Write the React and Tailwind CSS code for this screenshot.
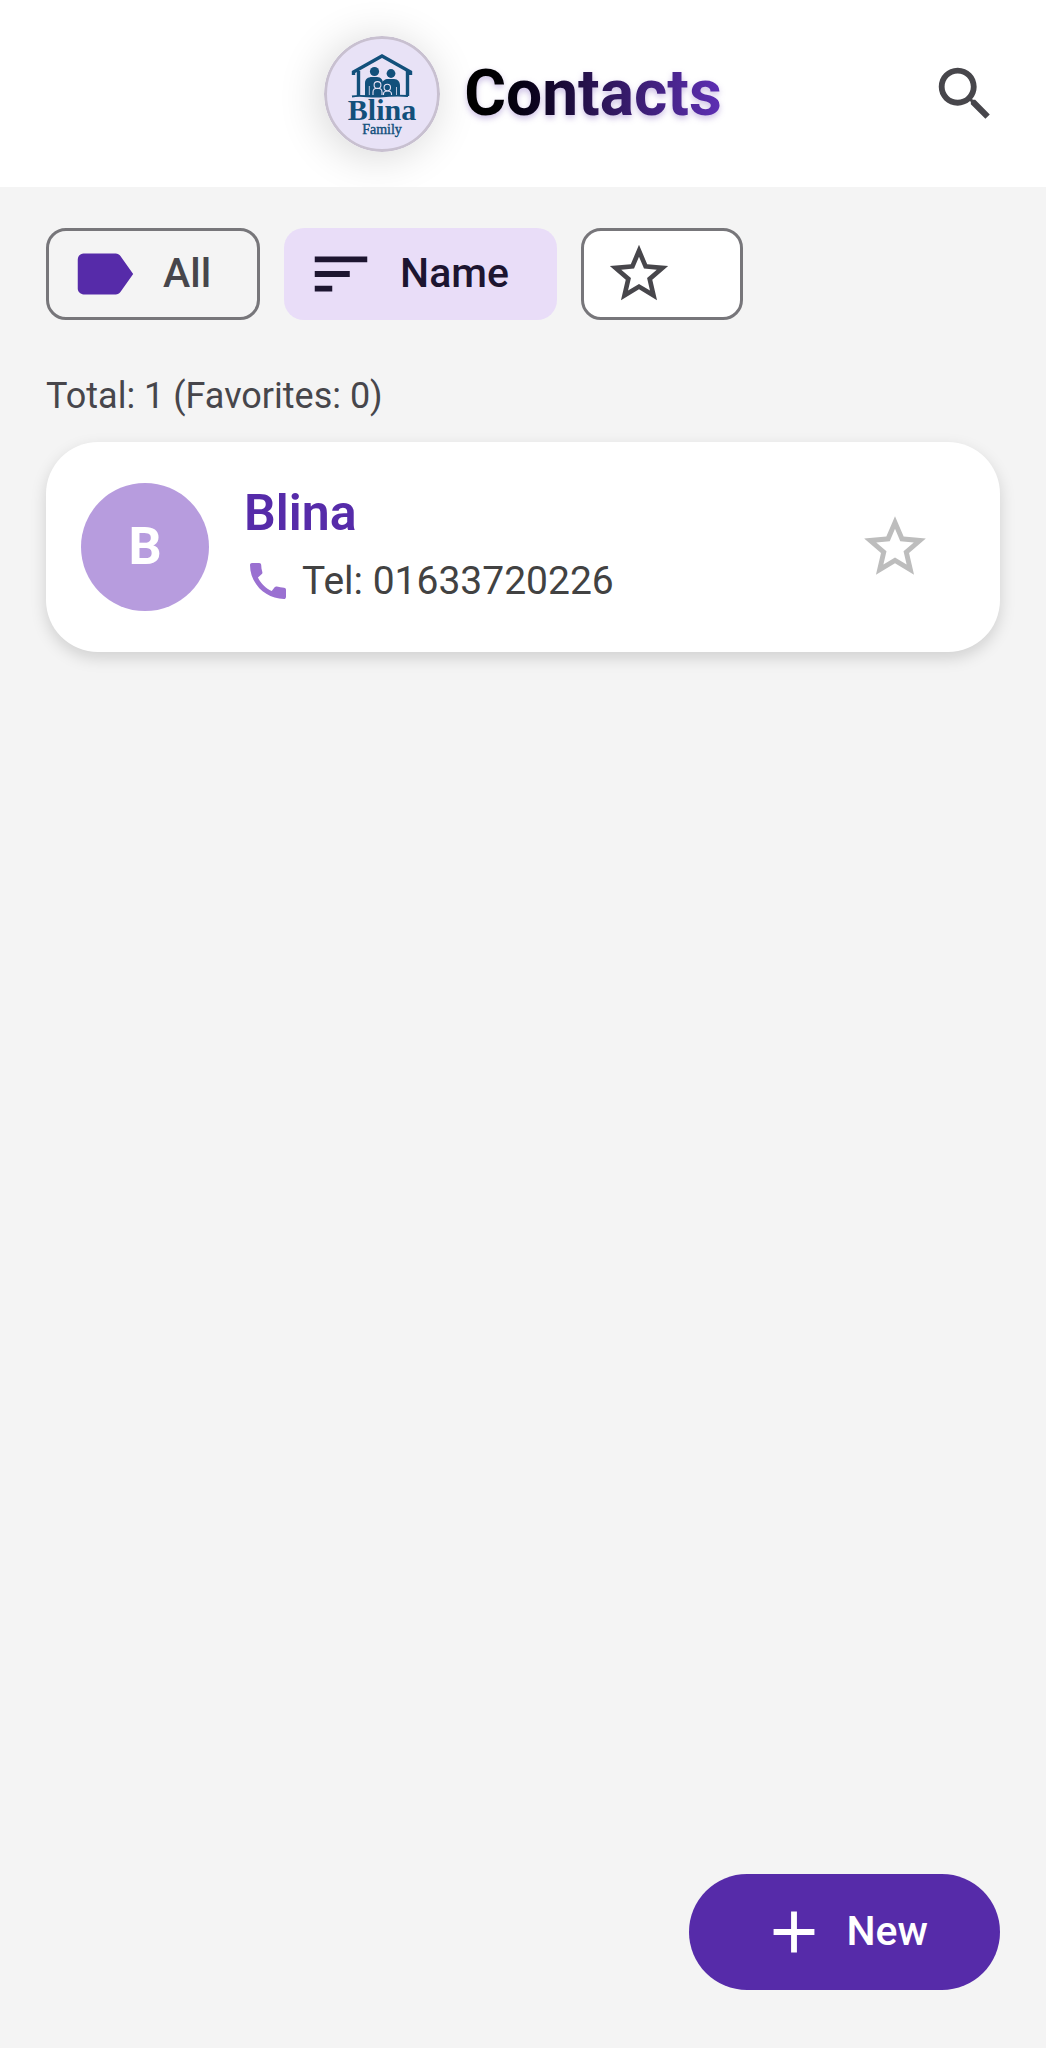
const LABEL = "M17.63 5.84C17.27 5.33 16.67 5 16 5L5 5.01C3.9 5.01 3 5.9 3 7v10c0 1.1.9 1.99 2 1.99L16 19c.67 0 1.27-.33 1.63-.84L22 12l-4.37-6.16z";
const SORT = "M3 18h6v-2H3v2zM3 6v2h18V6H3zm0 7h12v-2H3v2z";
const STAR = "M22 9.24l-7.19-.62L12 2 9.19 8.63 2 9.24l5.46 4.73L5.82 21 12 17.27 18.18 21l-1.63-7.03L22 9.24zM12 15.4l-3.76 2.27 1-4.28-3.32-2.88 4.38-.38L12 6.1l1.71 4.04 4.38.38-3.32 2.88 1 4.28L12 15.4z";
const SEARCH = "M15.5 14h-.79l-.28-.27C15.41 12.59 16 11.11 16 9.5 16 5.91 13.09 3 9.5 3S3 5.91 3 9.5 5.91 16 9.5 16c1.61 0 3.09-.59 4.23-1.57l.27.28v.79l5 4.99L20.49 19l-4.99-5zm-6 0C7.01 14 5 11.99 5 9.5S7.01 5 9.5 5 14 7.01 14 9.5 11.99 14 9.5 14z";
const PHONE = "M3.990 3C3.450 3 3 3.450 3 3.990 3 13.280 10.730 21 20.010 21c.71 0 .99-.63.99-1.180v-3.450c0-.54-.45-.99-.99-.99-1.240 0-2.450-.2-3.570-.57-.35-.12-.74-.03-1.010.24l-1.570 1.970c-2.830-1.350-5.480-3.900-6.890-6.830l1.950-1.660c.27-.28.35-.67.24-1.020-.37-1.110-.56-2.300-.56-3.530 0-.54-.45-.99-.99-.99H3.990z";
const PLUS = "M19 13h-6v6h-2v-6H5v-2h6V5h2v6h6v2z";

function Icon({ d, className }) {
  return (
    <svg viewBox="0 0 24 24" fill="currentColor" aria-hidden="true" className={`shrink-0 ${className}`}>
      <path d={d} />
    </svg>
  );
}

function Logo() {
  return (
    <svg viewBox="0 0 116 116" role="img" aria-label="Blina Family" className="size-29 rounded-full shadow-[-4px_4px_44px_rgba(0,0,0,0.16)]">
      <circle cx="58" cy="58" r="56.5" fill="#e8e2f6" stroke="#c8c0d0" strokeWidth="3" />
      <g fill="none" stroke="#12507b" strokeWidth="3.4">
        <path d="M29.500 39v-3L58 20 86.500 36v3" />
        <path d="M34.500 35v25M83.500 35v25" />
        <path d="M28 60.500c10-2 18 1 28 0s18-1.500 28-.5" strokeWidth="1.800" />
      </g>
      <g fill="#12507b">
        <circle cx="50.500" cy="35.500" r="4.600" />
        <circle cx="67" cy="37.500" r="4.400" />
        <path d="M41 60V47c0-4 3-6 7-6h5c4 0 6 3 6 7v12z" />
        <path d="M58 60V48c0-3 3-5 6-5h6c4 0 6 3 6 7v10z" />
      </g>
      <g fill="#12507b" stroke="#e8e2f6" strokeWidth="1.100">
        <path d="M49 59v-3c0-5 9-5 9 0v3M59.500 59v-1c0-4 8-4 8 0v1" />
        <circle cx="53.500" cy="49" r="3.400" />
        <circle cx="63.300" cy="51.500" r="3.200" />
      </g>
      <path d="M45.300 50v9M72.500 51v8" stroke="#e8e2f6" strokeWidth="0.800" />
      <text textAnchor="middle" fill="#12507b" stroke="#12507b" fontFamily="Liberation Serif, serif">
        <tspan x="58" y="84" fontSize="30" fontWeight="700" strokeWidth="0">Blina</tspan>
        <tspan x="58" y="98" fontSize="14" strokeWidth="0.400">Family</tspan>
      </text>
    </svg>
  );
}

export default function App() {
  return (
    <div className="flex min-h-screen flex-col bg-[#f4f4f4] font-['Roboto',sans-serif] text-[#47464b]">
      <header className="grid grid-cols-[1fr_auto_1fr] items-center overflow-hidden bg-white px-[46px] pt-9 pb-[35px]">
        <div className="col-start-2 flex items-center gap-6">
          <Logo />
          <h1 className="bg-linear-to-r from-black via-[#2a1452] to-[#5e2fb5] bg-clip-text text-[64px] leading-[80px] font-bold text-transparent drop-shadow-[0_3px_3px_rgba(86,43,169,0.3)]">
            Contacts
          </h1>
        </div>
        <button type="button" aria-label="Search" className="justify-self-end">
          <Icon d={SEARCH} className="size-[70px]" />
        </button>
      </header>

      <main className="px-[46px] pt-[41px]">
        <div className="flex gap-6">
          <button type="button" className="flex h-[92px] items-center gap-6 rounded-[20px] border-3 border-[#77767a] pr-[46px] pl-5 text-[41px] font-medium">
            <Icon d={LABEL} className="size-[70px] text-[#562ba9]" />
            All
          </button>
          <button type="button" aria-pressed="true" className="flex h-[92px] items-center gap-6 rounded-[20px] bg-[#e9ddf8] pr-12 pl-[22px] text-[41px] font-medium text-[#1d1530]">
            <Icon d={SORT} className="size-[70px]" />
            Name
          </button>
          <button type="button" aria-label="Favorites" className="flex h-[92px] items-center rounded-[20px] border-3 border-[#77767a] bg-white pr-[66px] pl-5">
            <Icon d={STAR} className="size-[70px]" />
          </button>
        </div>

        <p className="mt-[52px] text-[36px] leading-12">Total: 1 (Favorites: 0)</p>

        <article className="mt-[22px] flex items-center rounded-[52px] bg-white py-[39px] pr-[68px] pl-[35px] shadow-[0_6px_16px_rgba(0,0,0,0.15)]">
          <div className="flex size-32 shrink-0 items-center justify-center rounded-full bg-[#b79cde] text-[52px] font-bold text-white">
            B
          </div>
          <div className="ml-[35px] grow pt-1">
            <h2 className="text-[50px] leading-14 font-semibold text-[#562ba9]">Blina</h2>
            <p className="mt-2 flex items-center gap-2.5 text-[39px] leading-16 text-[#424242]">
              <Icon d={PHONE} className="size-12 text-[#9a70d1]" />
              Tel: 01633720226
            </p>
          </div>
          <button type="button" aria-label="Add Blina to favorites" className="text-[#bdbdbd]">
            <Icon d={STAR} className="size-[74px]" />
          </button>
        </article>
      </main>

      <footer className="mt-auto flex justify-end px-[46px] pb-[58px]">
        <button type="button" className="flex h-[116px] items-center gap-[18px] rounded-full bg-[#562ba9] pr-[72px] pl-[70px] text-[41px] font-medium text-white">
          <Icon d={PLUS} className="size-[70px]" />
          New
        </button>
      </footer>
    </div>
  );
}
